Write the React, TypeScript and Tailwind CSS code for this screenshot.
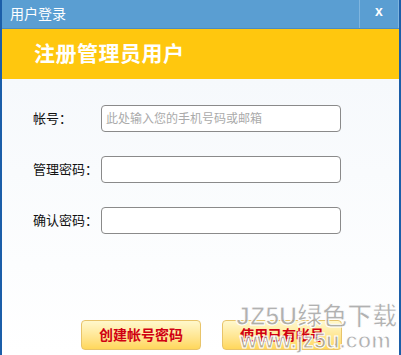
import React from "react";

const font = { fontFamily: '"Liberation Sans", "Noto Sans CJK SC", sans-serif' };

const fields = [
  { label: "帐号：", placeholder: "此处输入您的手机号码或邮箱" },
  { label: "管理密码：", placeholder: "" },
  { label: "确认密码：", placeholder: "" },
];

export default function App() {
  return (
    <div
      className="relative w-[401px] h-[355px] overflow-hidden flex flex-col border-x-2 border-[#1b5ea9] bg-[#fbfcfe]"
      style={font}
    >
      {/* title bar */}
      <div className="h-[29px] flex items-center bg-[#5a9ed2] border-b border-[#4a8cc4]">
        <span className="pl-2 text-[14px] text-white">用户登录</span>
        <div className="ml-auto h-full w-[40px] flex items-center justify-center border-x border-[#7fb5de]">
          <span className="text-[14px] font-bold text-white leading-none -mt-[6px]">x</span>
        </div>
      </div>

      {/* yellow header */}
      <div className="h-[50px] flex items-center bg-[#ffc70e] pl-[32px]">
        <h1 className="text-[21px] font-bold text-white tracking-[0.5px]">注册管理员用户</h1>
      </div>

      {/* form */}
      <div className="flex-1 flex flex-col bg-gradient-to-b from-[#f6f9fc] to-white">
        <div className="flex flex-col gap-[24px] pt-[26px]">
          {fields.map((f) => (
            <div key={f.label} className="flex items-center">
              <span className="w-[99px] pl-[31px] text-[13px] text-[#111]">{f.label}</span>
              <div className="w-[240px] h-[27px] rounded-[4px] border border-[#8a8a8a] bg-white flex items-center px-[4px]">
                <span className="text-[12px] text-[#aaa]">{f.placeholder}</span>
              </div>
            </div>
          ))}
        </div>

        <div className="mt-auto mb-[5px] flex gap-[21px] pl-[79px]">
          {["创建帐号密码", "使用已有帐号"].map((t) => (
            <button
              key={t}
              className="w-[120px] h-[30px] rounded-[4px] border border-[#e8c46a] bg-gradient-to-b from-[#fff8cc] to-[#ffd75a] text-[14px] font-bold text-[#d00012]"
            >
              {t}
            </button>
          ))}
        </div>
      </div>

      {/* watermark */}
      <div className="absolute left-[234px] top-[304px] pointer-events-none leading-none whitespace-nowrap">
        <div className="text-[25px] font-bold text-[#9c9c9c]/80 [-webkit-text-stroke:1px_white]">
          JZ5U绿色下载
        </div>
        <div className="pl-[4px] mt-[1px] text-[22px] font-bold text-[#9c9c9c]/80 [-webkit-text-stroke:1px_white]">
          www.jz5u.com
        </div>
      </div>
    </div>
  );
}
